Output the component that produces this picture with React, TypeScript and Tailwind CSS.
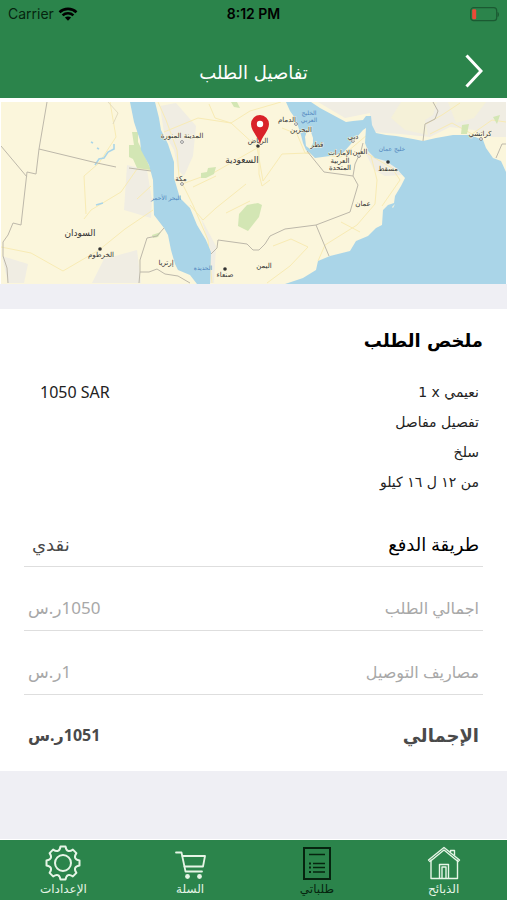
import React from "react";

const charges = [
  { label: "طريقة الدفع", value: "نقدي", labelStyle: "text-lg text-black", valueStyle: "text-lg text-[#4a4a4a] px-2" },
  { label: "اجمالي الطلب", value: "1050ر.س", labelStyle: "text-base text-[#a8a8a8]", valueStyle: "text-[17px] text-[#a8a8a8] px-1" },
  { label: "مصاريف التوصيل", value: "1ر.س", labelStyle: "text-base text-[#a8a8a8]", valueStyle: "text-[17px] text-[#a8a8a8] px-1" },
];

const cities = [
  { name: "المدينة المنورة", x: 182, y: 138, size: 7 },
  { name: "مكة", x: 181, y: 181, size: 7 },
  { name: "السعودية", x: 242, y: 163, size: 9 },
  { name: "السودان", x: 80, y: 236, size: 9 },
  { name: "الخرطوم", x: 101, y: 257, size: 7 },
  { name: "إرتريا", x: 166, y: 265, size: 7 },
  { name: "صنعاء", x: 225, y: 277, size: 7 },
  { name: "اليمن", x: 264, y: 268, size: 7 },
  { name: "الرياض", x: 258, y: 143, size: 7 },
  { name: "الدمام", x: 287, y: 122, size: 7 },
  { name: "البحرين", x: 301, y: 132, size: 7 },
  { name: "قطر", x: 317, y: 147, size: 7 },
  { name: "دبي", x: 353, y: 139, size: 7 },
  { name: "العين", x: 360, y: 154, size: 7 },
  { name: "الإمارات", x: 340, y: 155, size: 7 },
  { name: "العربية", x: 340, y: 163, size: 7 },
  { name: "المتحدة", x: 340, y: 170, size: 7 },
  { name: "مسقط", x: 388, y: 171, size: 7 },
  { name: "عمان", x: 363, y: 206, size: 7 },
  { name: "كراتشي", x: 480, y: 136, size: 7 },
];

const waters = [
  { name: "البحر الأحمر", x: 166, y: 200 },
  { name: "الحديدة", x: 203, y: 270 },
  { name: "الخليج", x: 309, y: 115 },
  { name: "العربي", x: 309, y: 122 },
  { name: "خليج عمان", x: 392, y: 151 },
];

const dots = [
  { x: 100, y: 249 },
  { x: 225, y: 269 },
  { x: 258, y: 146 },
  { x: 388, y: 162 },
];

const rings = [
  { x: 182, y: 142 },
  { x: 182, y: 184 },
  { x: 296, y: 124 },
  { x: 353, y: 141 },
  { x: 359, y: 156 },
  { x: 481, y: 139 },
];

function StatusBar() {
  return (
    <div dir="ltr" className="grid grid-cols-3 items-center h-7 px-2 font-['Inter',sans-serif] text-sm text-[#06240f]">
      <div className="flex items-center gap-1">
        <span>Carrier</span>
        <svg width="20" height="14" viewBox="0 0 20 14" aria-hidden="true">
          <g fill="none" stroke="#000" strokeWidth="2.6">
            <path d="M1.5 5.2C6.2.8 13.8.8 18.5 5.2" />
            <path d="M4.6 8.4C7.6 5.6 12.4 5.6 15.4 8.4" />
          </g>
          <path d="M6.9 10.6C8.7 9 11.3 9 13.1 10.6L10 13.8Z" />
        </svg>
      </div>
      <span className="text-center font-semibold text-black">8:12 PM</span>
      <svg className="justify-self-end" width="30" height="15" viewBox="0 0 30 15" aria-hidden="true">
        <rect x="1.7" y="0.7" width="26" height="13" rx="3" fill="none" stroke="#1b5a32" strokeWidth="1.2" />
        <rect x="3.2" y="2.3" width="4" height="10" rx="1.2" fill="#ec4a37" />
        <path d="M28.5 5c2 .6 2 4.4 0 5Z" fill="#1b5a32" />
      </svg>
    </div>
  );
}

function DeliveryMap() {
  return (
    <svg viewBox="1 102 505 182" className="block w-full" role="img" aria-label="خريطة التوصيل">
      <rect x="1" y="102" width="505" height="182" fill="#fbf6dc" />

      {/* Built-up and rocky ground */}
      <g fill="#f0ede3">
        <path d="M160 106L176 103L196 126L193 156L184 176L178 170L174 150L164 133Z" />
        <path d="M127 165L147 170L152 200L151 218L124 210Z" />
        <path d="M104 259L137 250L141 283H92Z" />
        <path d="M2 256L28 264L24 283H8Z" />
        <path d="M201 218L216 246L214 283H209L211 252Z" />
        <path d="M364 150L388 161L402 175L385 176L374 170Z" />
        <path d="M318 102L345 118L370 113L372 132L400 134L430 137L450 127L474 130L486 137L506 137V102Z" />
      </g>
      <g fill="#f5f1d8">
        <path d="M401 102L437 102L433 115L425 120L428 135L405 130L391 118Z" />
        <path d="M448 102H486L474 118L456 123Z" />
      </g>

      {/* Roads */}
      <g fill="none" stroke="#f8ebb4" strokeWidth="1">
        <path d="M158 102L166 120L177 150L179 177L193 205L208 240L212 283" />
        <path d="M164 132L198 118L231 123L257 147L263 181L282 154L308 153" />
        <path d="M209 104L215 118L231 123L250 111L281 102" />
        <path d="M182 184L215 172L236 160L259 147" />
        <path d="M1 247L31 253L63 271L99 250L125 229L153 210" />
        <path d="M84 219L91 210L121 192L137 169L150 169" />
        <path d="M86 214L84 176L99 163L116 137L110 102" />
        <path d="M259 147L259 174L262 186L270 180M190 205L203 220L216 208L246 184" />
        <path d="M282 128L297 134L305 153L341 157L367 135" />
        <path d="M371 156L377 180L375 204L357 225L325 245L318 261" />
        <path d="M341 222L360 232M273 246L291 239L308 247L290 266L267 283" />
        <path d="M368 154L392 168L400 180L382 206" />
        <path d="M426 124L442 115L460 103M430 134L452 123L472 134L492 120L506 122" />
        <path d="M137 199L151 186M193 187L216 176M226 213L250 201" />
      </g>

      {/* Parks */}
      <g fill="#d3e6b4">
        <path d="M132 132H138V142L143 152L151 170L137 168L133 159L129 157V145H134Z" />
        <path d="M239 214L247 205L258 203L262 205L259 217L248 231L238 226Z" />
        <path d="M201 173L207 172L208 168L216 167L214 174L206 178H201Z" />
        <path d="M152 235L161 232L158 237L153 238Z" />
        <path d="M462 125L469 124L467 134H461ZM493 117L500 115L497 124Z" />
        <path d="M231 102H237L240 108L234 107Z" />
      </g>

      {/* Seas */}
      <g fill="#aad5e8">
        <path d="M130 102H155L159 118L161 130L168 144L174 162V178L180 198L190 208L197 225L206 240L211 252L210 284H197L190 275L178 270L175 264L171 250L168 235L164 228L154 215L153 180L149 165L141 150L140 140L134 122Z" />
        <path d="M286 102L290 111L295 118L298 126L301 135L303 143L306 150L310 153L315 158L330 156L343 153L350 145L356 138L363 130L366 128L365 143L368 151L375 158L386 161L396 168L405 178L401 186L395 196L394 203L388 205L383 210L382 225L376 228L368 236L356 241L350 251L330 256L318 261L316 270L303 278L285 284H506V172L501 161L493 158L486 148L483 140L470 135L453 135L436 138L423 141L413 139L396 136L386 135L376 133L372 125L371 116H366L363 120L353 121L346 122L333 115L320 108L311 102Z" />
      </g>
      <path d="M307 131L311 132L313 138V143L310 149L306 146L305 137Z" fill="#fbf6dc" />
      <path d="M392 207L395 204L393 208Z" fill="#fbf6dc" />
      <path d="M95 165L99 159L104 158L108 152L114 149V144M91 142L93 143M96 205L103 203M97 148L99 149" fill="none" stroke="#aad5e8" strokeWidth="1.6" />

      {/* Borders */}
      <g fill="none" stroke="#bdb8aa" strokeWidth="1">
        <path d="M47 102L39 149L36 174L27 172L21 225L13 223L8 235L3 242V256L7 268L8 283" />
        <path d="M39 149L97 163L116 167M129 168L151 171M1 146L27 177" />
        <path d="M108 102L118 113L113 124" stroke="#e3dcc0" />
        <path d="M164 228L157 236L147 238L140 260V272L149 272L157 269L165 274L178 276L190 283" />
        <path d="M140 272L139 283M211 254L217 248L218 240L247 244L253 250H259L265 244L270 236L285 229L316 225L350 212L358 185L353 176L324 172L307 151" />
        <path d="M316 225L329 256M353 176L355 164L361 151L363 143" />
        <path d="M433 102L438 111L435 119L425 124L423 141M496 158L502 144L506 144" />
      </g>

      <g fill="#333">
        {dots.map((dot) => (
          <circle key={dot.x} cx={dot.x} cy={dot.y} r="1.8" />
        ))}
      </g>
      <g fill="#fff" stroke="#777" strokeWidth="0.8">
        {rings.map((ring) => (
          <circle key={`${ring.x}-${ring.y}`} cx={ring.x} cy={ring.y} r="1.4" />
        ))}
      </g>

      <g fill="#333" stroke="#fbf6dc" strokeWidth="1" paintOrder="stroke" textAnchor="middle">
        {cities.map((city) => (
          <text key={city.name} x={city.x} y={city.y} fontSize={city.size}>
            {city.name}
          </text>
        ))}
      </g>
      <g fill="#4e84bd" textAnchor="middle" fontSize="6">
        {waters.map((water) => (
          <text key={water.name} x={water.x} y={water.y}>
            {water.name}
          </text>
        ))}
      </g>

      {/* Order pin */}
      <path d="M260 144C258 136 251 131 251 124A9 9 0 0 1 269 124C269 131 262 136 260 144Z" fill="#d92229" />
      <circle cx="260" cy="124" r="3.2" fill="#fff" />
    </svg>
  );
}

function HomeIcon() {
  return (
    <svg width="34" height="34" viewBox="0 0 34 34" fill="none" stroke="currentColor" strokeWidth="1.4" strokeLinejoin="round" aria-hidden="true">
      <path d="M4 13.5V32.5H30.5V13.5" />
      <path d="M1.5 14L17 1.5L32.5 14L31 15.5L17 4L3 15.5Z" />
      <path d="M23.5 6V4.5H27.5V9.5" />
      <path d="M12.5 32V18.5H21.5V32M15 32V21H19V32" />
    </svg>
  );
}

function OrdersIcon() {
  return (
    <svg width="34" height="34" viewBox="0 0 34 34" fill="none" stroke="currentColor" strokeWidth="1.6" aria-hidden="true">
      <rect x="4" y="2" width="26" height="31" strokeWidth="2" />
      <path d="M9 8.5H25M13 17.5H25M13 21.5H25M13 26H25" />
      <path d="M9 17.5H11M9 21.5H11M9 26H11" strokeWidth="2" />
    </svg>
  );
}

function CartIcon() {
  return (
    <svg width="34" height="34" viewBox="0 0 34 34" fill="none" stroke="currentColor" strokeWidth="1.8" strokeLinecap="round" strokeLinejoin="round" aria-hidden="true">
      <path d="M3 6.5H8.5L12.5 25.5H29" />
      <path d="M9.5 10H32L30 20.5H11.5" />
      <circle cx="14.5" cy="30.5" r="2.4" fill="currentColor" stroke="none" />
      <circle cx="26.5" cy="30.5" r="2.4" fill="currentColor" stroke="none" />
    </svg>
  );
}

function GearIcon() {
  return (
    <svg width="36" height="36" viewBox="0 0 36 36" fill="none" stroke="currentColor" strokeWidth="2" strokeLinejoin="round" aria-hidden="true">
      <path d="M15.5 1.5H20.5Q21.2 5.2 23 5.8Q24.8 6.7 27.9 4.6L31.4 8.1Q29.3 11.2 30.2 13Q30.8 14.8 34.5 15.5V20.5Q30.8 21.2 30.2 23Q29.3 24.8 31.4 27.9L27.9 31.4Q24.8 29.3 23 30.2Q21.2 30.8 20.5 34.5H15.5Q14.8 30.8 13 30.2Q11.2 29.3 8.1 31.4L4.6 27.9Q6.7 24.8 5.8 23Q5.2 21.2 1.5 20.5V15.5Q5.2 14.8 5.8 13Q6.7 11.2 4.6 8.1L8.1 4.6Q11.2 6.7 13 5.8Q14.8 5.2 15.5 1.5Z" />
      <circle cx="18" cy="18" r="8" />
    </svg>
  );
}

const tabs = [
  { label: "الذبائح", Icon: HomeIcon, active: false },
  { label: "طلباتي", Icon: OrdersIcon, active: true },
  { label: "السلة", Icon: CartIcon, active: false },
  { label: "الإعدادات", Icon: GearIcon, active: false },
];

export default function App() {
  return (
    <div dir="rtl" lang="ar" className="min-h-screen flex flex-col bg-[#efeff4] font-['DejaVu_Sans',sans-serif]">
      <header className="bg-[#2b844b]">
        <StatusBar />
        <div className="flex items-center h-[70px] px-6 pt-4 text-white">
          <button type="button" aria-label="رجوع" className="w-4">
            <svg width="18" height="34" viewBox="0 0 18 34" fill="none" stroke="currentColor" strokeWidth="3" aria-hidden="true">
              <path d="M1.5 1.5L16 17L1.5 32.5" />
            </svg>
          </button>
          <h1 className="flex-1 pt-1 text-center text-lg">تفاصيل الطلب</h1>
          <div className="w-4" />
        </div>
      </header>

      <main className="flex-1">
        <div className="bg-white px-px pt-1">
          <DeliveryMap />
        </div>

        <section className="mt-[25px] bg-white px-6 pt-3 pb-3">
          <h2 className="text-lg leading-10 font-bold">ملخص الطلب</h2>

          <div className="flex items-start justify-between mt-4 ps-1 pe-4 text-sm leading-[30px] text-[#222]">
            <ul>
              <li>
                نعيمي <bdi>x</bdi> 1
              </li>
              <li>تفصيل مفاصل</li>
              <li>سلخ</li>
              <li>من ١٢ ل ١٦ كيلو</li>
            </ul>
            <span dir="ltr" className="font-['Noto_Sans',sans-serif] text-base leading-[30px]">1050 SAR</span>
          </div>

          <dl className="mt-[6px] font-['Noto_Sans','DejaVu_Sans',sans-serif]">
            {charges.map((row) => (
              <div key={row.label} className="flex items-end justify-between h-16 pb-1 border-b border-[#dedede]">
                <dt className={`ps-1 leading-9 ${row.labelStyle}`}>{row.label}</dt>
                <dd className={`leading-9 ${row.valueStyle}`}>{row.value}</dd>
              </div>
            ))}
            <div className="flex items-end justify-between h-16 pb-[6px] font-bold text-[#4a4a4a]">
              <dt className="ps-1 text-lg leading-9">الإجمالي</dt>
              <dd className="px-1 text-base leading-9">1051ر.س</dd>
            </div>
          </dl>
        </section>
      </main>

      <nav className="grid grid-cols-4 h-[61px] border-t border-white bg-[#2b844b]">
        {tabs.map(({ label, Icon, active }) => (
          <a
            key={label}
            href="#"
            aria-current={active ? "page" : undefined}
            className={`flex flex-col items-center pt-[5px] text-xs leading-4 ${active ? "text-[#06240f]" : "text-[#e6f5e6]"}`}
          >
            <span className="flex items-center h-9">
              <Icon />
            </span>
            {label}
          </a>
        ))}
      </nav>
    </div>
  );
}
